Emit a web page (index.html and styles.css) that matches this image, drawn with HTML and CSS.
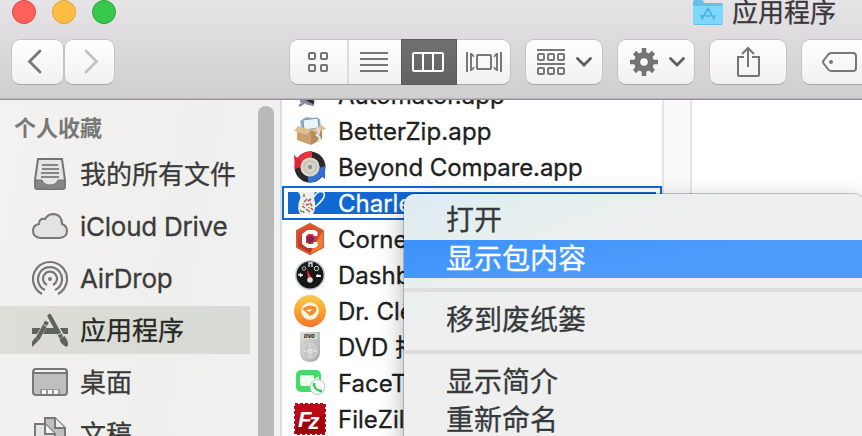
FILE: index.html
```html
<!DOCTYPE html>
<html lang="zh-CN">
<head>
<meta charset="utf-8">
<title>应用程序</title>
<link rel="stylesheet" href="styles.css">
</head>
<body>
<div class="window">
  <header class="chrome">
    <div class="titlebar">
      <div class="lights"><span class="light red"></span><span class="light yellow"></span><span class="light green"></span></div>
      <div class="title">
        <svg width="30" height="26" viewBox="0 0 30 26"><path d="M0 3Q0 0 2 0H8Q10 0 11 2L12 3H28Q30 3 30 5V23Q30 25 28 25H2Q0 25 0 23Z" fill="#65bfe8"/><path d="M0 6H30V22Q30 24 28 24H2Q0 24 0 22Z" fill="#7ed7fc"/><path d="M8.500 19.500 15 8.500 21.500 19.500M7 16H10M13 16H18M21 16H23" fill="none" stroke="#49aee0" stroke-width="1.500"/></svg>
        <span>应用程序</span>
      </div>
    </div>
    <div class="toolbar">
      <div class="btn back"><svg width="16" height="26" viewBox="0 0 16 26"><path d="M13 2 2.500 12.500 13 23" fill="none" stroke="#777" stroke-width="2.800" stroke-linecap="round"/></svg></div>
      <div class="btn next"><svg width="16" height="26" viewBox="0 0 16 26"><path d="M3 2 13.500 12.500 3 23" fill="none" stroke="#c1c1c1" stroke-width="2.600" stroke-linecap="round"/></svg></div>
      <div class="btn segments">
        <div class="seg s1"><svg width="22" height="22" viewBox="0 0 22 22" fill="none" stroke="#737373" stroke-width="2"><rect x="2" y="2" width="6" height="6" rx="1"/><rect x="14" y="2" width="6" height="6" rx="1"/><rect x="2" y="14" width="6" height="6" rx="1"/><rect x="14" y="14" width="6" height="6" rx="1"/></svg></div>
        <div class="seg s2"><svg width="28" height="20" viewBox="0 0 28 20"><path d="M0 1H28M0 7H28M0 13H28M0 19H28" stroke="#777" stroke-width="2"/></svg></div>
        <div class="seg s3"><svg width="32" height="20" viewBox="0 0 32 20" fill="none" stroke="#fff" stroke-width="2"><rect x="1" y="1" width="30" height="18" rx="1"/><path d="M11 1V19M21 1V19"/></svg></div>
        <div class="seg s4"><svg width="36" height="22" viewBox="0 0 36 22" fill="none" stroke="#777" stroke-width="2"><rect x="11" y="4" width="14" height="14" rx="1"/><path d="M1 1V21M35 1V21"/><path d="M5 2V20M31 2V20"/><path d="M6 3 8 6M6 19 8 16M30 3 28 6M30 19 28 16" stroke-width="1.500"/></svg></div>
      </div>
      <div class="btn arrange"><svg width="28" height="26" viewBox="0 0 28 26" fill="none" stroke="#777" stroke-width="2"><path d="M0 1H28M0 15H28"/><rect x="1" y="5" width="6" height="6" rx="1"/><rect x="11" y="5" width="6" height="6" rx="1"/><rect x="21" y="5" width="6" height="6" rx="1"/><rect x="1" y="19" width="6" height="6" rx="1"/><rect x="11" y="19" width="6" height="6" rx="1"/><rect x="21" y="19" width="6" height="6" rx="1"/></svg><svg class="chev" width="16" height="10" viewBox="0 0 16 10"><path d="M1.500 1.500 8 8 14.500 1.500" fill="none" stroke="#5c5c5c" stroke-width="2.700" stroke-linecap="round"/></svg></div>
      <div class="btn gear"><svg width="28" height="28" viewBox="-14 -14 28 28"><path d="M0-14V14M-14 0H14M-9.500-9.500 9.500 9.500M-9.500 9.500 9.500-9.500" stroke="#747474" stroke-width="4.600"/><circle r="7" fill="none" stroke="#747474" stroke-width="6"/><circle r="3.800" fill="#f8f8f8"/></svg><svg class="chev" width="16" height="10" viewBox="0 0 16 10"><path d="M1.500 1.500 8 8 14.500 1.500" fill="none" stroke="#5c5c5c" stroke-width="2.700" stroke-linecap="round"/></svg></div>
      <div class="btn share"><svg width="24" height="32" viewBox="0 0 24 32" fill="none" stroke="#747474" stroke-width="2"><path d="M8 11H2V29Q2 30 3 30H22Q23 30 23 29V11H16M12 21V2M6 8 12 2 18 8"/></svg></div>
      <div class="btn tag"><svg width="36" height="22" viewBox="0 0 36 22"><path d="M9 2H31Q34 2 34 5V17Q34 20 31 20H9Q7 20 5 17L2 13Q0 11 2 9L5 5Q7 2 9 2Z" fill="none" stroke="#777" stroke-width="2"/><circle cx="9" cy="11" r="2" fill="#777"/></svg></div>
    </div>
  </header>
  <main class="body">
    <aside class="sidebar">
      <nav class="places">
        <h2>个人收藏</h2>
        <div class="place"><svg width="36" height="36" viewBox="0 0 36 36"><path d="M6 3H30L33 24V30Q33 33 31 33H5Q3 33 3 30V24Z" fill="#e5e5e3" stroke="#757573" stroke-width="2"/><path d="M3 24H10Q12 29 18 29T26 24H33V30Q33 33 31 33H5Q3 33 3 30Z" fill="#858583" stroke="#757573"/><path d="M10 9H26M10 13H27M9 17H27M9 21H27" stroke="#858583" stroke-width="2"/></svg><span>我的所有文件</span></div>
        <div class="place"><svg width="36" height="36" viewBox="0 0 36 36"><path d="M8 30Q1 29 1 23Q1 17 7 16Q7 10 13 11Q16 6 22 6Q30 7 30 16Q35 18 35 23Q35 29 28 30Z" fill="#e3e3e1" stroke="#777775" stroke-width="2"/></svg><span class="latin">iCloud Drive</span></div>
        <div class="place"><svg width="36" height="36" viewBox="0 0 36 36" fill="none" stroke="#777775" stroke-width="2.200"><path d="M10 34A17 17 0 1 1 26 34M13 30A12 12 0 1 1 23 30M15 25A7 7 0 1 1 21 25" /><circle cx="18" cy="19" r="2" fill="#777775" stroke="none"/></svg><span class="latin">AirDrop</span></div>
        <div class="place selected"><svg width="36" height="36" viewBox="0 0 36 36"><path d="M0 16H8.500L5 22H0ZM14 16H23L26.500 22H11ZM28 16H36V22H31.500Z" fill="#60625c"/><path d="M17.500 4 28.500 24" stroke="#60625c" stroke-width="4.200" stroke-linecap="round"/><path d="M15 9.500 5.500 27" stroke="#60625c" stroke-width="4.200"/><path d="M3 25.500 7 28 0 35V30ZM27.500 27 32.500 24Q38 31 35 35Q29 33 27.500 27Z" fill="#60625c"/><path d="M11.500 12.500 16 15M25 23.500 30 20.500" stroke="#dcddd7" stroke-width="1"/></svg><span>应用程序</span></div>
        <div class="place"><svg width="36" height="36" viewBox="0 0 36 36"><rect x="1" y="5" width="34" height="26" rx="3" fill="#bfbfbd" stroke="#777775" stroke-width="2"/><path d="M3 6H33V8H3Z" fill="#f5f5f3"/><path d="M2 9H34" stroke="#777775" stroke-width="2"/><path d="M8 25H28V30H8Z" fill="#999997"/><path d="M10 26H14V30H10ZM16 26H20V30H16ZM22 26H26V30H22Z" fill="#f5f5f3"/></svg><span>桌面</span></div>
        <div class="place"><svg width="36" height="36" viewBox="0 0 36 36" stroke="#777775" stroke-width="2"><path d="M13 2H23L33 12V30H13Z" fill="#bfbfbd"/><path d="M23 2V12H33" fill="#eee"/><path d="M3 8H13L23 18V34H3Z" fill="#e3e3e1"/><path d="M13 8V18H23" fill="#f5f5f3"/></svg><span>文稿</span></div>
      </nav>
      <div class="scrollbar"></div>
    </aside>
    <section class="files">
      <div class="file"><svg width="32" height="32" viewBox="0 0 32 32"><path d="M7 23 20 12 22 20 16 25Z" fill="#505064"/><path d="M6 22 20 23M5 27 11 23M12 24 20 26" stroke="#8588a0" stroke-width="2.500"/><path d="M13 20 20 24" stroke="#27273c" stroke-width="3"/></svg><span>Automator.app</span></div>
      <div class="file"><svg width="32" height="32" viewBox="0 0 32 32"><path d="M6 6 12 2 26 4 27 14 7 13Z" fill="#8db6ca"/><path d="M9 5 24 3 25 13 10 15Z" fill="#eaf3f8" stroke="#7098ae"/><path d="M3 12 17 15V30L3 25Z" fill="#c8a06c"/><path d="M17 15 28 11V24L17 30Z" fill="#b48a57"/><path d="M4 11 0 16 13 20 17 15ZM17 15 22 18 32 14 28 10Z" fill="#dfbe8d"/><path d="M23 13Q27 17 23 20Q28 23 24 27" fill="none" stroke="#dce4e8" stroke-width="2.500"/></svg><span class="better">BetterZip.app</span></div>
      <div class="file"><svg width="32" height="32" viewBox="0 0 32 32"><circle cx="16" cy="16" r="12.500" fill="none" stroke="#292929" stroke-width="6"/><path d="M4 14Q6 4 18 3" fill="none" stroke="#e43642" stroke-width="6"/><path d="M0 4 12 14 1 18Z" fill="#df2535"/><path d="M28 18Q25 28 14 29" fill="none" stroke="#3473d6" stroke-width="6"/><path d="M31 28 19 19 31 15Z" fill="#326cd2"/><circle cx="16" cy="16" r="9.500" fill="#d8d4c8"/><circle cx="16" cy="16" r="6" fill="none" stroke="#c5c1b5" stroke-width="1.500"/><circle cx="16" cy="16" r="2.200" fill="#87919d"/></svg><span class="beyond">Beyond Compare.app</span></div>
      <div class="file chosen"><div class="fill"><svg width="32" height="22" viewBox="0 0 32 22"><path d="M20 5Q24-2 29 0Q34 4 21 15" fill="none" stroke="#eaf3fc" stroke-width="1.600"/><path d="M4 0H21Q19 5 21 10Q22 17 19 22H6Q3 17 5 10Q8 4 4 0Z" fill="#f0f0ea"/><path d="M10 2V5M13 7 10 10M16 11 18 14M8 14 11 16M12 17 16 20M9 19 10 21M6 18 8 20" stroke="#6b7b65" stroke-width="1.500"/><path d="M14 9 17 7M12 13 15 12M17 16 19 18" stroke="#d44458" stroke-width="1.600"/><path d="M9 11 10 13M14 15 16 16" stroke="#d5af38" stroke-width="1.600"/></svg><span>Charles.app</span></div></div>
      <div class="file"><svg width="32" height="32" viewBox="0 0 32 32"><defs><linearGradient id="cg" x1="0" y1="0" x2="0" y2="1"><stop stop-color="#df5636"/><stop offset="1" stop-color="#b42b28"/></linearGradient></defs><path d="M16 1 29 8V24L16 31 3 24V8Z" fill="url(#cg)" stroke="#d55a2c" stroke-width="2" stroke-linejoin="round"/><path d="M29 8V24L16 31 20 22Z" fill="#ed7c34"/><path d="M21.500 13V10L20 9H14L10 12V20L14 23H20L21.500 22V19" fill="none" stroke="#fff" stroke-width="4"/><path d="M16 12 20 14V18L16 20 13 18V14Z" fill="#84205d"/></svg><span>Cornerstone.app</span></div>
      <div class="file"><svg width="32" height="32" viewBox="0 0 32 32"><circle cx="16" cy="16" r="14.300" fill="#171719" stroke="#c8ced2" stroke-width="1.500"/><circle cx="10" cy="9.500" r="1.800" fill="none" stroke="#bbb"/><circle cx="22.500" cy="9.500" r="2.200" fill="none" stroke="#ddd"/><path d="M15 8V4H18V8M4 16H9M6 14 7 18" fill="none" stroke="#eee" stroke-width="1.300"/><path d="M22 17Q23 14 25 16 27 15 27 18H22" fill="#fff"/><path d="M13 10 18 20H14Z" fill="#ed3037"/><circle cx="16" cy="21" r="2.800" fill="#e0e0e0"/></svg><span>Dashboard.app</span></div>
      <div class="file"><svg width="32" height="32" viewBox="0 0 32 32"><defs><linearGradient id="og" x1="0" y1="0" x2="0" y2="1"><stop stop-color="#f8ca4f"/><stop offset=".5" stop-color="#f9a432"/><stop offset="1" stop-color="#f4752b"/></linearGradient></defs><circle cx="16" cy="16" r="16" fill="url(#og)"/><circle cx="16" cy="16" r="8.800" fill="#fff4df"/><path d="M8 14Q15 8 22 12 24 18 16 21L13 18Z" fill="#f38d29"/><path d="M12 15 19 14 15 17Z" fill="#fff"/></svg><span>Dr. Cleaner.app</span></div>
      <div class="file"><svg width="32" height="32" viewBox="0 0 32 32"><defs><linearGradient id="dg" x1="0" y1="0" x2="1" y2="1"><stop stop-color="#dedede"/><stop offset="1" stop-color="#a7a7a7"/></linearGradient></defs><path d="M6 1H26V20Q26 31 16 31T6 20Z" fill="url(#dg)"/><path d="M9 2.500H23V8H9Z" fill="#dce0c8"/><text x="10" y="7" class="dvd-mark">DVD</text><circle cx="16" cy="20" r="7.500" fill="#c5c5c5" stroke="#e0e0e0" stroke-width=".7"/><circle cx="16" cy="20" r="3" fill="#ddd"/><path d="M16 14V16M16 24V26M10 20H12M20 20H22" stroke="#eee" stroke-width="1.300"/></svg><span>DVD 播放器.app</span></div>
      <div class="file"><svg width="32" height="32" viewBox="0 0 32 32"><rect x="2" y="3" width="25" height="22" rx="5" fill="#43dc66"/><rect x="6" y="8" width="14" height="11" rx="2" fill="#f1fff2"/><path d="M20 12 25 9V18L20 15Z" fill="#d8f8dd"/><circle cx="23.500" cy="20" r="7.500" fill="#f8f8f8" stroke="#bac8bc"/><path d="M20 17Q20 23 27 24" fill="none" stroke="#35c755" stroke-width="2"/><path d="M20 16V19M25 24H28" stroke="#35c755" stroke-width="2.500"/></svg><span>FaceTime.app</span></div>
      <div class="file"><svg width="32" height="32" viewBox="0 0 32 32"><rect x="1" y="1" width="30" height="30" fill="#b80b17" stroke="#b80b17" stroke-width="2" stroke-dasharray="3 2"/><path d="M2 21 30 12V30H2Z" fill="#a0000c"/><text x="4" y="24" class="fz-mark">F<tspan dx="-3" dy="2">z</tspan></text></svg><span>FileZilla.app</span></div>
    </section>
    <div class="gutter"></div>
    <section class="preview"></section>
  </main>
  <div class="menu">
    <div class="item">打开</div>
    <div class="item active">显示包内容</div>
    <div class="rule"></div>
    <div class="item">移到废纸篓</div>
    <div class="rule"></div>
    <div class="item">显示简介</div>
    <div class="item">重新命名</div>
  </div>
</div>
</body>
</html>
```
FILE: styles.css
```css
* { box-sizing: border-box; }
body { margin: 0; overflow: hidden; font-family: Inter, "Noto Sans CJK SC", sans-serif; color: #202020; }
svg { display: block; flex: none; }
.window { position: relative; width: 862px; height: 436px; overflow: hidden; background: #fff; }
.chrome { height: 100px; background: linear-gradient(#e6e4e7, #d0ced1 97px); border-bottom: 1px solid #919092; box-shadow: inset 0 -1px #b8b6b8; }
.titlebar { height: 39px; display: flex; padding-left: 12px; }
.lights { display: flex; gap: 16px; width: 681px; }
.light { width: 24px; height: 24px; border-radius: 50%; border: 1px solid; }
.red { background: #fe605c; border-color: #de4644; }
.yellow { background: #ffbd42; border-color: #dda034; }
.green { background: #35c84a; border-color: #24a936; }
.title { display: flex; gap: 9px; height: 26px; line-height: 26px; font-size: 26px; color: #39373a; -webkit-text-stroke: .3px; }
.toolbar { display: flex; width: 900px; height: 46px; padding-left: 11px; }
.btn { height: 46px; flex: none; display: flex; align-items: center; border-radius: 9px; background: linear-gradient(#fefefe, #f1f1f1); border: 1px solid #c5c3c6; border-bottom-color: #aaa8aa; }
.back { width: 53px; padding-left: 15px; }
.next { width: 51px; margin-right: 174px; padding-left: 18px; }
.segments { width: 222px; margin-right: 14px; }
.seg { height: 44px; display: flex; align-items: center; justify-content: center; }
.s1 { width: 59px; padding-right: 2px; border-right: 2px solid #dddcde; }
.s2 { width: 52px; padding-right: 2px; }
.s3 { width: 56px; height: 46px; padding-right: 2px; background: linear-gradient(#707070, #626262); border: 1px solid #5c5c5c; }
.s4 { width: 53px; }
.arrange { width: 78px; margin-right: 14px; padding-left: 11px; gap: 11px; }
.gear { width: 78px; margin-right: 14px; padding-left: 12px; gap: 11px; }
.share { width: 78px; margin-right: 14px; padding-left: 26px; }
.tag { width: 77px; padding-left: 20px; }
.body { height: 336px; display: flex; }
.sidebar { width: 282px; flex: none; display: flex; background: linear-gradient(100deg, #f3f2f0, #efefee 60%, #f1f1f2); border-right: 2px solid #dcdcdd; }
.places { width: 258px; }
.places h2 { margin: 0; height: 50px; padding: 10px 0 0 14px; font-size: 22px; line-height: 36px; font-weight: 700; color: #777775; }
.place { width: 250px; height: 48px; margin-bottom: 4px; padding-left: 32px; display: flex; align-items: center; gap: 12px; font-size: 26px; line-height: 48px; white-space: nowrap; color: #3b3b39; }
.place span { padding-top: 2px; -webkit-text-stroke: .3px; }
.selected { background: linear-gradient(90deg, #deddd7, #d8dad5); color: #262823; }
.place .latin { letter-spacing: -.25px; }
.scrollbar { width: 16px; height: 346px; margin-top: 6px; border-radius: 8px; background: #b9b9b8; }
.files { width: 380px; flex: none; overflow: hidden; }
.file { height: 36px; padding-left: 12px; display: flex; align-items: center; gap: 12px; font-size: 24px; line-height: 34px; white-space: nowrap; -webkit-text-stroke: .3px; }
.file > span { padding-top: 2px; }
.file:first-child { margin-top: -23px; }
.better { letter-spacing: .1px; }
.beyond { letter-spacing: -.08px; }
.chosen { height: 34px; margin: 1px 0; padding: 4px; border: 2px solid #1268d2; }
.fill { width: 368px; height: 22px; display: flex; gap: 12px; padding-left: 6px; background: #1268d2; color: #fff; line-height: 24px; }
.dvd-mark { font: italic 900 5px Inter, sans-serif; fill: #333; }
.fz-mark { font: italic 900 22px "Liberation Sans", sans-serif; fill: #fff; }
.gutter { width: 30px; flex: none; background: #fafafa; border: solid #e5e5e5; border-width: 0 2px; }
.preview { flex: 1; background: #fff; }
.menu { position: absolute; left: 404px; top: 194px; width: 460px; height: 270px; padding-top: 8px; border-radius: 10px; background: linear-gradient(155deg, #deebf3 0, #e5efef 65px, #efefef 140px); box-shadow: 0 0 0 1px rgba(0,0,0,.2), 0 8px 24px rgba(0,0,0,.32); font-size: 28px; color: #363a3b; -webkit-text-stroke: .3px; }
.item { height: 38px; padding-left: 42px; line-height: 36px; }
.active { line-height: 38px; background: linear-gradient(170deg, #3c91fa, #4d9bfb 55%); color: #fff; }
.rule { height: 4px; margin: 10px 0; background: #dedede; }
```
